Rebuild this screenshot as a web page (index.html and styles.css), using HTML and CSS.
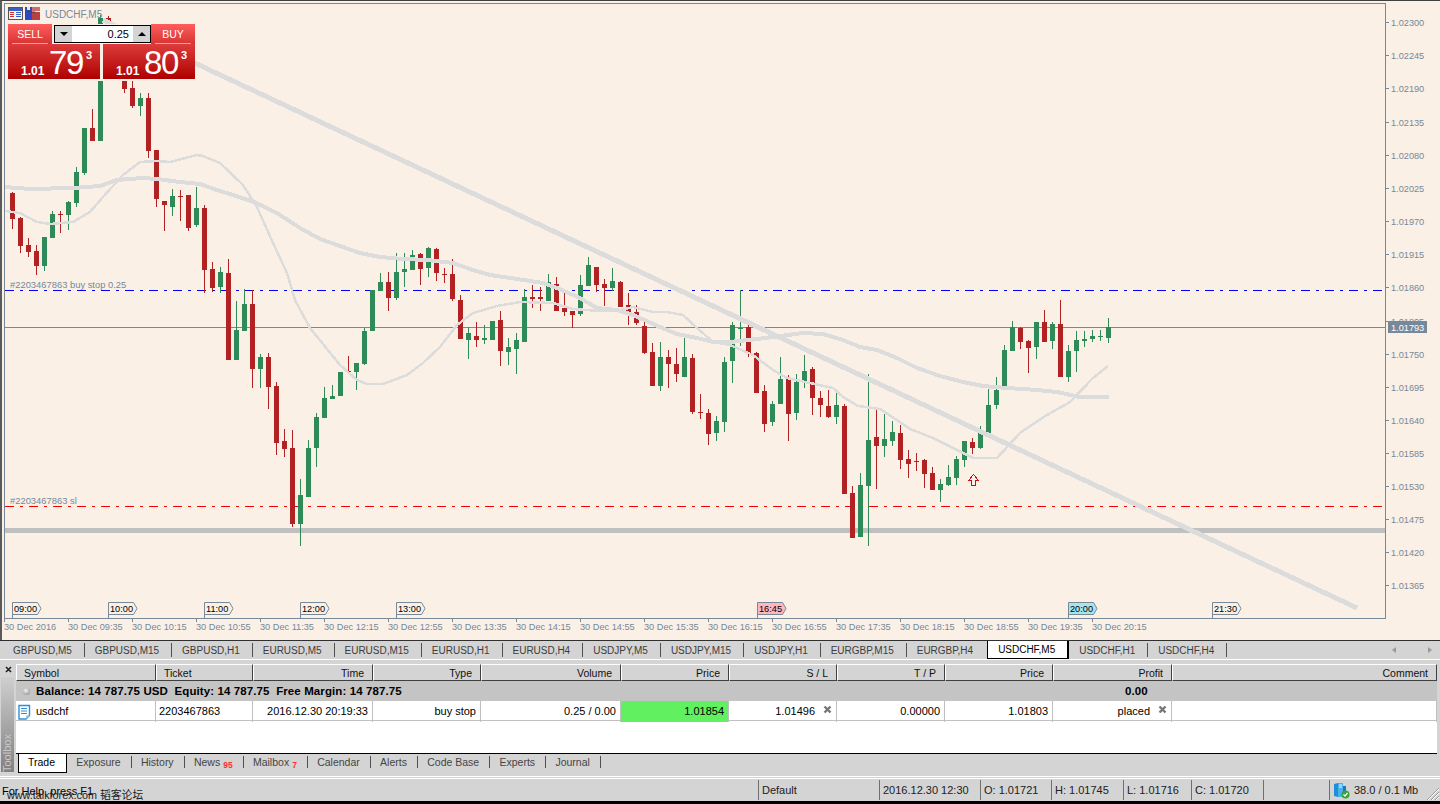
FILE: index.html
```html
<!DOCTYPE html>
<html lang="en">
<head>
  <meta charset="UTF-8" />
  <title>USDCHF,M5</title>
  <link rel="stylesheet" href="styles.css">
</head>
<body>
  <!-- CHART -->
  <div class="chart">
    <svg id="chart" class="plot" width="1440" height="640" viewBox="0 0 1440 640">
      <line class="hline silver" x1="5" y1="530.5" x2="1385" y2="530.5"/>
      <line class="hline blue" x1="5" y1="290.5" x2="1384" y2="290.5"/>
      <line class="hline red" x1="5" y1="506.5" x2="1384" y2="506.5"/>
      <line class="hline bid" x1="5" y1="327.5" x2="1385" y2="327.5"/>
      <g id="candles"></g>
      <polyline class="ma thick" points="5,187 30,189 73,188 100,186 117,180 143,178 157,179 180,182 200,184 217,190 233,195 257,203 280,215 300,228 320,239 340,246 360,253 380,257 403,259 427,260 453,263 473,270 490,275 517,279 543,283 557,288 580,298 597,308 617,310 633,315 660,327 677,334 697,338 713,342 730,342 757,339 780,336 803,333 823,334 843,340 860,347 877,350 897,358 917,368 940,376 963,382 983,386 1007,388 1037,390 1057,392 1080,397 1109,397"/>
      <polyline class="ma thin" points="5,211 20,213 37,222 50,224 73,222 90,212 103,197 123,175 140,162 157,161 170,162 197,155 203,156 220,163 243,185 257,207 273,243 287,273 295,300 310,328 340,365 357,380 367,384 383,384 407,375 423,363 440,347 457,325 473,313 497,306 520,302 553,303 573,309 600,311 620,310 633,307 653,312 667,312 683,315 697,328 713,342 730,345 753,355 773,370 787,378 833,388 843,397 858,406 880,409 910,429 933,438 953,448 973,458 997,458 1020,433 1047,415 1070,402 1093,378 1108,366"/>
      <line class="trend" x1="103" y1="20" x2="1357" y2="608"/>
      <path class="arrow" d="M973.5 474.5 L978.5 480.5 H975.5 V485.5 H971.5 V480.5 H968.5 Z"/>
      <text class="order-label" x="10" y="288">#2203467863 buy stop 0.25</text>
      <text class="order-label" x="10" y="504">#2203467863 sl</text>
      <text class="symbol-label" x="45" y="18">USDCHF,M5</text>
      <rect class="frame" x="4.5" y="3.5" width="1381" height="615"/>
      <g id="axes"></g>
      <rect class="bid-tag" x="1388" y="321" width="39" height="12"/>
      <text class="bid-text" x="1391" y="330.5">1.01793</text>

      <!-- table and save icons by the symbol -->
      <rect x="8.5" y="7.5" width="14" height="12" fill="#f4f4f4" stroke="#555"/>
      <rect x="9" y="8" width="13" height="3" fill="#3a5fc0"/>
      <path d="M10 12.5h4M10 14.5h4M10 16.5h4" stroke="#c83030"/>
      <path d="M16 12.5h5M16 14.5h5M16 16.5h5" stroke="#3a5fc0"/>
      <path d="M25 7h7v13h-7z" fill="#2a48c8"/>
      <path d="M27 7h3v3h-3z" fill="#e8e8f8"/>
      <path d="M32 12h8v8h-8z" fill="#b84040"/>
      <path d="M32 7h8v4h-8z" fill="#c87070"/>
      <path d="M28.5 10v2h7" fill="none" stroke="#444"/>
    </svg>

    <div class="trade-panel">
      <div class="trade-top">
        <div class="trade-btn sell-btn"><span>SELL</span></div>
        <div class="lot">
          <span class="lot-btn"><i class="tri-down"></i></span>
          <span class="lot-value">0.25</span>
          <span class="lot-btn"><i class="tri-up"></i></span>
        </div>
        <div class="trade-btn buy-btn"><span>BUY</span></div>
      </div>
      <div class="trade-prices">
        <div class="price"><span class="price-small">1.01</span><span class="price-big">79</span><span class="price-sup">3</span></div>
        <div class="price"><span class="price-small">1.01</span><span class="price-big">80</span><span class="price-sup">3</span></div>
      </div>
    </div>
  </div>

  <!-- CHART TABS -->
  <div class="tabbar">
    <span class="tab">GBPUSD,M5</span>
    <span class="tab">GBPUSD,M15</span>
    <span class="tab">GBPUSD,H1</span>
    <span class="tab">EURUSD,M5</span>
    <span class="tab">EURUSD,M15</span>
    <span class="tab">EURUSD,H1</span>
    <span class="tab">EURUSD,H4</span>
    <span class="tab">USDJPY,M5</span>
    <span class="tab">USDJPY,M15</span>
    <span class="tab">USDJPY,H1</span>
    <span class="tab">EURGBP,M15</span>
    <span class="tab tab-plain">EURGBP,H4</span>
    <span class="tab tab-active">USDCHF,M5</span>
    <span class="tab">USDCHF,H1</span>
    <span class="tab">USDCHF,H4</span>
    <span class="tab-arrows"><i class="arrow-left"></i><i class="arrow-right"></i></span>
  </div>

  <!-- TOOLBOX -->
  <div class="toolbox">
    <div class="toolbox-side">
      <svg class="toolbox-close" width="9" height="9" viewBox="0 0 9 9"><path d="M2 2l5 5M7 2l-5 5" stroke="#222" stroke-width="1.6"/></svg>
      <div class="toolbox-title"><span>Toolbox</span></div>
    </div>
    <div class="toolbox-main">
      <div class="grid-row head">
        <div class="left">Symbol</div>
        <div class="left">Ticket</div>
        <div>Time</div>
        <div>Type</div>
        <div>Volume</div>
        <div>Price</div>
        <div>S / L</div>
        <div>T / P</div>
        <div>Price</div>
        <div>Profit</div>
        <div>Comment</div>
      </div>
      <div class="balance">
        <i class="ball"></i>
        <b class="balance-text">Balance: 14 787.75 USD&nbsp; Equity: 14 787.75&nbsp; Free Margin: 14 787.75</b>
        <b class="balance-profit">0.00</b>
      </div>
      <div class="grid-row order">
        <div class="left symbol-cell">
          <svg width="13" height="16" viewBox="0 0 13 16"><path d="M1 1.5h10.5v10l-3.5 3.500H1z" fill="#fff" stroke="#2f8fd8" stroke-width="1.400"/><path d="M3 4.500h6M3 7h6M3 9.500h6" stroke="#2f8fd8"/><path d="M8 15l3.500-3.500H8z" fill="#9cc8ec"/></svg>
          usdchf
        </div>
        <div class="left">2203467863</div>
        <div>2016.12.30 20:19:33</div>
        <div>buy stop</div>
        <div>0.25 / 0.00</div>
        <div class="price-hot">1.01854</div>
        <div class="with-x">1.01496
          <svg width="9" height="9" viewBox="0 0 9 9"><path d="M1.500 1.500l6 6M7.500 1.500l-6 6" stroke="#777" stroke-width="2.400"/></svg>
        </div>
        <div>0.00000</div>
        <div>1.01803</div>
        <div class="with-x">placed
          <svg width="9" height="9" viewBox="0 0 9 9"><path d="M1.500 1.500l6 6M7.500 1.500l-6 6" stroke="#777" stroke-width="2.400"/></svg>
        </div>
        <div></div>
      </div>
      <div class="blank"></div>
      <div class="bottom-tabs">
        <span class="btab btab-active">Trade</span>
        <span class="btab">Exposure</span>
        <span class="btab">History</span>
        <span class="btab">News<sub>95</sub></span>
        <span class="btab">Mailbox<sub>7</sub></span>
        <span class="btab">Calendar</span>
        <span class="btab">Alerts</span>
        <span class="btab">Code Base</span>
        <span class="btab">Experts</span>
        <span class="btab">Journal</span>
      </div>
    </div>
  </div>

  <!-- STATUS BAR -->
  <div class="statusbar">
    <div class="status-help">For Help, press F1<span class="watermark">www.talkforex.com 韬客论坛</span></div>
    <div class="cell w-default">Default</div>
    <div class="cell w-date">2016.12.30 12:30</div>
    <div class="cell w-o">O: 1.01721</div>
    <div class="cell w-h">H: 1.01745</div>
    <div class="cell w-l">L: 1.01716</div>
    <div class="cell w-c">C: 1.01720</div>
    <div class="cell w-gap"></div>
    <div class="cell w-conn">
      <svg width="17" height="17" viewBox="0 0 17 17"><path d="M1 2l4-1v14l-4-1z" fill="#1f8fd8"/><path d="M5 1h5v14H5z" fill="#4ab0ee"/><path d="M6 3h3M6 5h3" stroke="#e8f6ff"/><path d="M10 4h3v8h-3z" fill="#1a78c0"/><circle cx="12.500" cy="12.500" r="4" fill="#3aa03a"/><path d="M10.500 12.500l1.500 1.500 2.500-3" fill="none" stroke="#fff" stroke-width="1.300"/></svg>
      38.0 / 0.1 Mb
    </div>
    <svg class="grip" width="15" height="15" viewBox="0 0 15 15"><path d="M14 2L2 14M14 6L6 14M14 10l-4 4" stroke="#9a9a9a"/><path d="M14 3L3 14M14 7l-7 7M14 11l-3 3" stroke="#fff"/></svg>
  </div>
  <div class="screen-edge"></div>

  <script src="chart.js"></script>
</body>
</html>
```
FILE: styles.css
```css
* {
  box-sizing: border-box;
}
html, body {
  margin: 0;
  padding: 0;
}
body {
  width: 1440px;
  height: 804px;
  overflow: hidden;
  background: #d4d4d4;
  font-family: "Liberation Sans", Arial, sans-serif;
  font-size: 11px;
  color: #000;
}

/* chart */
.chart {
  position: relative;
  height: 640px;
  background: #faf0e6;
  border-top: 1px solid #404040;
  border-left: 2px solid #5a5a5a;
}
.plot {
  position: absolute;
  left: -2px;
  top: -1px;
  display: block;
}
.hline {
  stroke-width: 1;
  shape-rendering: crispEdges;
}
.hline.silver {
  stroke: #c0c0c0;
  stroke-width: 5;
}
.hline.blue {
  stroke: #0000ff;
  stroke-dasharray: 9 6 3 6;
}
.hline.red {
  stroke: #ff0000;
  stroke-dasharray: 9 6 3 6;
}
.hline.bid {
  stroke: #778899;
}
.ma, .trend {
  fill: none;
  stroke: #dcdcdc;
  stroke-linejoin: round;
  shape-rendering: crispEdges;
}
.ma.thick {
  stroke-width: 4;
}
.ma.thin {
  stroke-width: 2.5;
}
.trend {
  stroke-width: 5;
}
.arrow {
  fill: #faf0e6;
  stroke: #c81010;
  shape-rendering: crispEdges;
}
.frame {
  fill: none;
  stroke: #778899;
  shape-rendering: crispEdges;
}
.order-label, .axis-text, .symbol-label {
  font-family: "Liberation Sans", Arial, sans-serif;
  font-size: 9.2px;
  fill: #778899;
}
.order-label {
  font-size: 9.4px;
}
.symbol-label {
  font-size: 10px;
}
.tick {
  stroke: #778899;
  shape-rendering: crispEdges;
}
.bid-tag {
  fill: #778899;
}
.bid-text {
  font-family: "Liberation Sans", Arial, sans-serif;
  font-size: 9.2px;
  fill: #fff;
}
.hour-tag {
  fill: #faf0e6;
  stroke: #778899;
}
.hour-tag.pink {
  fill: #ffb6c1;
}
.hour-tag.aqua {
  fill: #a8e4ec;
}
.hour-text {
  font-family: "Liberation Sans", Arial, sans-serif;
  font-size: 9.2px;
  fill: #000;
}

/* one click trading */
.trade-panel {
  position: absolute;
  left: 6px;
  top: 23px;
  width: 187px;
  height: 57px;
  background: #faf0e6;
}
.trade-top {
  display: flex;
  height: 20px;
}
.trade-btn {
  width: 44px;
  height: 20px;
  background: linear-gradient(#ff5c5c, #d83434);
  color: #fff;
  font-size: 10.5px;
  text-align: center;
  padding-top: 4px;
}
.trade-btn span {
  display: block;
  height: 16px;
  margin: 0 4px;
  border-bottom: 1px solid #ff9a9a;
}
.lot {
  display: flex;
  width: 97px;
  height: 18px;
  margin: 1px 0 0 2px;
  background: #fff;
  border: 1px solid #000;
}
.lot-btn {
  width: 17px;
  background: #d4d4d4;
  display: flex;
  align-items: center;
  justify-content: center;
}
.lot-value {
  flex: 1;
  text-align: right;
  padding-right: 4px;
  line-height: 16px;
  font-size: 11px;
}
.buy-btn {
  margin-left: auto;
}
.tri-down, .tri-up {
  width: 0;
  height: 0;
  border-left: 4px solid transparent;
  border-right: 4px solid transparent;
}
.tri-down {
  border-top: 4px solid #000;
}
.tri-up {
  border-bottom: 4px solid #000;
}
.trade-prices {
  display: flex;
  justify-content: space-between;
}
.price {
  width: 92px;
  height: 35px;
  background: linear-gradient(#dc3c3c, #b00000);
  color: #fff;
  display: flex;
  align-items: flex-start;
  padding-left: 13px;
}
.price-small {
  font-weight: bold;
  font-size: 12px;
  width: 28px;
  margin-top: 20px;
}
.price-big {
  font-size: 33px;
  line-height: 38px;
  letter-spacing: -1.4px;
}
.price-sup {
  font-weight: bold;
  font-size: 11px;
  margin: 5px 0 0 3px;
}

/* chart tabs */
.tabbar {
  display: flex;
  align-items: center;
  height: 20px;
  padding-left: 3px;
  border-top: 1px solid #303030;
  border-bottom: 1px solid #fff;
  font-size: 10px;
  letter-spacing: -0.015px;
  color: #3c3c3c;
}
.tab {
  display: block;
  height: 14px;
  line-height: 16px;
  padding: 0 12px 0 10px;
  border-right: 1px solid #505050;
  white-space: nowrap;
}
.tab-plain {
  border-right: 0;
}
.tab-active {
  height: 18px;
  line-height: 18px;
  margin-top: -1px;
  background: #fff;
  color: #000;
  border: 1px solid #000;
  border-width: 0 1px 1px 1px;
  border-right-width: 2px;
  margin-left: 2px;
  margin-right: 0;
}
.tab-arrows {
  margin-left: auto;
  width: 40px;
  margin-right: 8px;
  display: flex;
  justify-content: space-between;
}
.arrow-left, .arrow-right {
  width: 0;
  height: 0;
  border-top: 3px solid transparent;
  border-bottom: 3px solid transparent;
}
.arrow-left {
  border-right: 4px solid #999;
}
.arrow-right {
  border-left: 4px solid #999;
}

/* toolbox */
.toolbox {
  display: flex;
  height: 117px;
  border-bottom: 1px solid #fff;
}
.toolbox-side {
  width: 16px;
  padding-left: 1px;
}
.toolbox-close {
  display: block;
  margin: 5px 0 0 3px;
  height: 9px;
}
.toolbox-title {
  height: 95px;
  width: 13px;
  margin-top: 3px;
  /* the box is turned over, so the dark end is listed first */
  background: linear-gradient(#808080, #cfcfcf);
  color: #c8c8c8;
  writing-mode: vertical-rl;
  transform: rotate(180deg);
  font-size: 11px;
  line-height: 13px;
}
.toolbox-main {
  width: 1421px;
  padding-top: 4px;
}
.grid-row {
  display: grid;
  grid-template-columns: 140px 97px 120px 108px 140px 108px 108px 108px 108px 119px 265px;
}
.grid-row.head {
  height: 17px;
}
.head div {
  text-align: right;
  line-height: 14px;
  padding: 1px 8px 0 7px;
  border: 1px solid #d4d4d4;
  border-color: #fff #404040 #404040 #fff;
  font-size: 10.500px;
  color: #101010;
}
.head .left {
  text-align: left;
}
.balance {
  position: relative;
  height: 20px;
  background: #c4c4c4;
  display: flex;
  align-items: center;
  padding-left: 7px;
  font-size: 11.500px;
  letter-spacing: 0.1px;
}
.ball {
  width: 7px;
  height: 7px;
  border-radius: 50%;
  background: radial-gradient(circle at 40% 35%, #f4f4f4, #808080);
  margin-right: 6px;
}
.balance-text {
  white-space: nowrap;
}
.balance-profit {
  position: absolute;
  left: 1109px;
  font-size: 11.500px;
}
.grid-row.order {
  height: 20px;
  background: #fff;
  border-bottom: 1px solid #c0c0c0;
}
.order div {
  text-align: right;
  line-height: 21px;
  padding: 0 4px;
  border-right: 1px solid #c0c0c0;
  white-space: nowrap;
}
.order .left {
  text-align: left;
  padding-left: 3px;
}
.order .symbol-cell {
  padding-left: 2px;
  display: flex;
  align-items: center;
  gap: 5px;
}
.order .price-hot {
  background: #60f060;
}
.order .with-x {
  display: flex;
  justify-content: flex-end;
  align-items: flex-start;
  gap: 8px;
}
.with-x svg {
  margin-top: 4px;
}
.blank {
  height: 32px;
  background: #fff;
}
.bottom-tabs {
  display: flex;
  height: 20px;
  align-items: flex-start;
  border-top: 1px solid #000;
  padding: 2px 0 0 2px;
  color: #444;
  font-size: 10.500px;
}
.btab {
  display: block;
  height: 12px;
  line-height: 12px;
  padding: 0 10px 0 9.3px;
  border-right: 1px solid #505050;
  white-space: nowrap;
}
.btab-active {
  height: 19px;
  width: 49px;
  line-height: 17px;
  margin-top: -2px;
  padding: 0 0 0 9px;
  background: #fff;
  color: #000;
  border: 1px solid #000;
  border-width: 0 1px 1px 1px;
}
.btab sub {
  font-size: 8.500px;
  color: #ff3030;
  font-weight: bold;
  margin-left: 3px;
  vertical-align: -2px;
  line-height: 0;
}

/* status bar */
.statusbar {
  display: flex;
  height: 23px;
  margin-top: 1px;
  border-top: 1px solid #fff;
  line-height: 21px;
  position: relative;
  font-size: 11px;
  color: #202020;
}
.status-help {
  position: relative;
  width: 758px;
  padding-left: 2px;
  font-size: 11px;
  line-height: 24px;
  color: #000;
}
.watermark {
  position: absolute;
  left: 7px;
  top: 4px;
  font-size: 10.800px;
  color: #222;
  font-family: "Liberation Sans", "Noto Sans CJK SC", sans-serif;
}
.cell {
  padding-left: 3px;
  border-left: 1px solid #707070;
  white-space: nowrap;
  height: 20px;
  margin-top: 1px;
}
.w-default { width: 121px; }
.w-date { width: 101px; }
.w-o { width: 71px; }
.w-h { width: 72px; }
.w-l { width: 68px; }
.w-c { width: 72px; }
.w-gap { width: 66px; }
.w-conn {
  width: 96px;
  display: flex;
  align-items: center;
  gap: 4px;
}
.grip {
  position: absolute;
  right: 0;
  bottom: 0;
}
.screen-edge {
  height: 4px;
  background: #000;
}
```
FILE: chart.js
```js
// type, body top, body bottom, wick top, wick bottom (page pixels)
const candles = [
  ['r',193,219,192,229],['r',218,246,217,253],['r',245,252,238,257],['r',251,266,245,275],
  ['g',237,266,237,271],['g',214,238,211,238],['r',214,215,211,233],['g',202,215,201,230],
  ['g',172,203,167,207],['g',128,173,128,175],['r',128,141,109,141],['g',18,141,15,141],
  ['r',18,60,16,68],['r',58,70,50,75],['r',60,89,40,93],['r',88,106,70,108],
  ['g',98,106,93,116],['r',98,151,93,158],['r',150,199,150,207],['r',201,205,201,231],
  ['g',196,207,189,216],['r',196,197,190,221],['r',195,228,195,231],['g',208,225,187,227],
  ['r',208,270,205,293],['r',269,288,262,292],['g',272,287,267,293],['r',273,360,259,360],
  ['g',330,360,301,360],['g',304,331,289,331],['r',304,369,290,388],['g',357,369,354,388],
  ['r',357,387,353,409],['r',386,443,382,455],['r',441,449,429,457],['r',448,524,430,527],
  ['g',495,524,479,546],['g',448,497,440,497],['g',417,448,413,467],['g',398,418,387,418],
  ['g',396,399,385,399],['g',372,396,372,396],['r',371,372,356,372],['g',363,372,363,390],
  ['g',331,364,328,365],['g',290,331,290,331],['g',282,291,273,291],['r',282,298,272,311],
  ['g',272,298,253,300],['g',269,272,253,287],['g',255,270,250,270],['r',254,269,253,285],
  ['g',248,268,247,277],['r',249,273,248,281],['r',274,275,268,283],['r',274,299,259,301],
  ['r',300,339,295,339],['g',333,340,327,359],['r',336,340,322,347],['g',338,340,325,344],
  ['g',321,340,321,340],['r',320,351,311,366],['g',347,352,338,365],['g',340,349,333,374],
  ['g',297,342,289,342],['r',297,299,285,308],['r',297,299,287,311],['g',282,301,274,301],
  ['r',284,311,277,311],['r',308,312,293,316],['r',311,315,311,328],['g',285,314,275,316],
  ['g',265,286,257,286],['r',267,285,267,292],['r',284,288,279,306],['g',281,288,268,291],
  ['r',282,307,281,307],['r',305,313,293,325],['r',312,323,305,325],['r',326,353,318,354],
  ['r',352,386,343,386],['g',357,386,342,391],['r',357,364,350,388],['r',364,374,348,382],
  ['g',357,377,337,377],['r',358,412,354,414],['r',412,413,394,419],['r',413,434,409,445],
  ['g',421,433,416,441],['g',362,422,357,432],['g',325,361,322,383],['g',328,329,290,346],
  ['r',327,354,322,357],['r',353,393,352,393],['r',391,424,385,432],['g',404,422,401,426],
  ['g',379,404,357,404],['r',379,414,375,441],['g',382,413,374,420],['g',371,382,355,388],
  ['r',369,398,367,415],['r',398,405,391,417],['r',406,417,390,418],['g',405,417,391,424],
  ['r',406,494,404,494],['r',493,538,486,538],['g',485,537,473,537],['g',440,486,374,546],
  ['r',437,446,410,489],['g',439,446,414,457],['g',432,441,421,446],['r',433,460,425,469],
  ['r',459,464,450,478],['r',461,462,453,471],['r',460,474,459,488],['r',473,490,467,490],
  ['g',484,490,479,502],['g',477,485,465,486],['g',459,478,456,485],['g',441,460,441,467],
  ['r',442,448,438,454],['g',432,448,426,449],['g',405,434,389,434],['g',390,405,377,409],
  ['g',350,386,345,386],['g',327,351,321,351],['r',328,342,327,349],['r',341,348,340,373],
  ['g',322,347,322,359],['r',322,342,310,342],['g',324,341,322,349],['r',324,377,300,377],
  ['g',351,377,345,382],['g',340,351,331,372],['g',339,341,331,347],['g',336,339,330,342],
  ['g',336,337,330,341],['g',327,338,318,343]
];

const prices = [
  ['1.02300',22],['1.02245',55],['1.02190',88],['1.02135',122],['1.02080',155],
  ['1.02025',188],['1.01970',221],['1.01915',254],['1.01860',287],['1.01805',321],
  ['1.01750',354],['1.01695',387],['1.01640',420],['1.01585',453],['1.01530',486],
  ['1.01475',519],['1.01420',552],['1.01365',585]
];

const times = ['30 Dec 2016','30 Dec 09:35','30 Dec 10:15','30 Dec 10:55','30 Dec 11:35',
  '30 Dec 12:15','30 Dec 12:55','30 Dec 13:35','30 Dec 14:15','30 Dec 14:55','30 Dec 15:35',
  '30 Dec 16:15','30 Dec 16:55','30 Dec 17:35','30 Dec 18:15','30 Dec 18:55','30 Dec 19:35',
  '30 Dec 20:15'];

const hours = [['09:00',12,''],['10:00',108,''],['11:00',204,''],['12:00',300,''],['13:00',396,''],
  ['16:45',757,'pink'],['20:00',1068,'aqua'],['21:30',1212,'']];

function el(parent, name, attrs, text) {
  const node = document.createElementNS('http://www.w3.org/2000/svg', name);
  for (const key in attrs) node.setAttribute(key, attrs[key]);
  if (text) node.textContent = text;
  parent.appendChild(node);
  return node;
}

const candleLayer = document.getElementById('candles');
candles.forEach(function (c, i) {
  const x = 10 + 8 * i;
  const color = c[0] === 'g' ? '#2e8b57' : '#b22222';
  el(candleLayer, 'rect', { x: x + 2, y: c[3], width: 1, height: c[4] - c[3], fill: color, 'shape-rendering': 'crispEdges' });
  el(candleLayer, 'rect', { x: x, y: c[1], width: 5, height: c[2] - c[1], fill: color, 'shape-rendering': 'crispEdges' });
});

const axes = document.getElementById('axes');
prices.forEach(function (p) {
  el(axes, 'line', { class: 'tick', x1: 1385, y1: p[1] + 0.5, x2: 1389, y2: p[1] + 0.5 });
  el(axes, 'text', { class: 'axis-text', x: 1391, y: p[1] + 3.5 }, p[0]);
});
times.forEach(function (t, i) {
  const x = 4 + 64 * i;
  el(axes, 'line', { class: 'tick', x1: x + 0.5, y1: 618, x2: x + 0.5, y2: 622 });
  el(axes, 'text', { class: 'axis-text', x: x, y: 630 }, t);
});
hours.forEach(function (h) {
  const x = h[1] + 0.5;
  el(axes, 'path', { class: 'hour-tag ' + h[2], d: 'M' + x + ' 618 V602.5 H' + (x + 25) + ' L' + (x + 28.5) + ' 608.5 L' + (x + 25) + ' 614.5 H' + x });
  el(axes, 'text', { class: 'hour-text', x: x + 1.5, y: 612 }, h[0]);
});
```
